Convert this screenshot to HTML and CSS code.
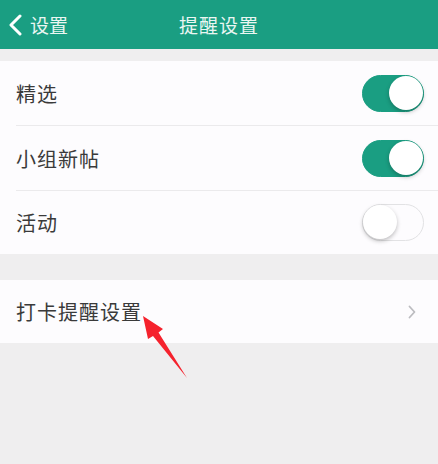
FILE: index.html
```html
<!DOCTYPE html>
<html>
<head>
    <title>提醒设置</title>
    <meta charset="UTF-8">
    <link rel="stylesheet" href="styles.css">
</head>
<body>
<div class="nav">
    <div class="nav__back">
        <svg class="nav__arrow" viewBox="0 0 14 22">
            <path d="M12 2L3 11l9 9" fill="none" stroke="#fff" stroke-width="3" stroke-linecap="round" stroke-linejoin="round"></path>
        </svg>
        <span>设置</span>
    </div>
    <div class="nav__title">提醒设置</div>
</div>
<div class="group group--first">
    <div class="cell">
        <div class="cell__label">精选</div>
        <div class="switch switch--on"><i></i></div>
    </div>
    <div class="cell">
        <div class="cell__label">小组新帖</div>
        <div class="switch switch--on"><i></i></div>
    </div>
    <div class="cell">
        <div class="cell__label">活动</div>
        <div class="switch"><i></i></div>
    </div>
</div>
<div class="group">
    <div class="cell cell--link">
        <div class="cell__label">打卡提醒设置</div>
        <svg class="cell__more" viewBox="0 0 8 14">
            <path d="M1.5 1.5L6.5 7l-5 5.5" fill="none" stroke="#bcbcc0" stroke-width="1.8" stroke-linecap="round" stroke-linejoin="round"></path>
        </svg>
    </div>
</div>
<svg class="mark" viewBox="0 0 438 464">
    <polygon points="143,316 163,329 158.5,332.5 187,378 153,336 148,339" fill="#f5222d"></polygon>
</svg>
</body>
</html>
```

FILE: styles.css
```css
body {
    margin: 0;
    height: 464px;
    overflow: hidden;
    position: relative;
    background-color: #efeeef;
    color: #3a3a3a;
    font-family: "Noto Sans CJK SC", "Noto Sans", sans-serif;
}

.nav {
    height: 49px;
    background-color: #1a9e82;
    color: #eaf6f2;
    display: flex;
    align-items: center;
    justify-content: center;
    position: relative;
}

.nav__back {
    position: absolute;
    left: 8px;
    top: 0;
    height: 49px;
    display: flex;
    align-items: center;
    font-size: 19px;
}

.nav__arrow {
    width: 14px;
    height: 22px;
    margin-right: 8px;
}

.nav__title {
    font-size: 19px;
    letter-spacing: 1px;
}

.group {
    background-color: #fdfcfe;
    margin-top: 26px;
}

.group--first {
    margin-top: 12px;
}

.cell {
    height: 65px;
    margin-left: 16px;
    padding-right: 14px;
    display: flex;
    align-items: center;
    justify-content: space-between;
    border-bottom: 1px solid #ebeaec;
    box-sizing: border-box;
}

.cell:last-child {
    border-bottom: 0;
    height: 63px;
}

.cell--link {
    padding-right: 22px;
}

.cell__label {
    font-size: 20px;
    letter-spacing: 1px;
}

.cell__more {
    width: 8px;
    height: 14px;
}

.switch {
    width: 62px;
    height: 37px;
    border-radius: 19px;
    box-sizing: border-box;
    border: 1.5px solid #e2e2e4;
    background-color: #fdfcfe;
    position: relative;
}

.switch i {
    position: absolute;
    top: 0;
    left: 0;
    width: 34px;
    height: 34px;
    border-radius: 50%;
    background: #fff;
    box-shadow: 0 2px 4px rgba(0, 0, 0, .25);
}

.switch--on {
    background-color: #1a9e82;
    border-color: #1a9e82;
}

.switch--on i {
    left: auto;
    right: 0;
}

.mark {
    position: absolute;
    left: 0;
    top: 0;
    width: 438px;
    height: 464px;
    pointer-events: none;
}
```
